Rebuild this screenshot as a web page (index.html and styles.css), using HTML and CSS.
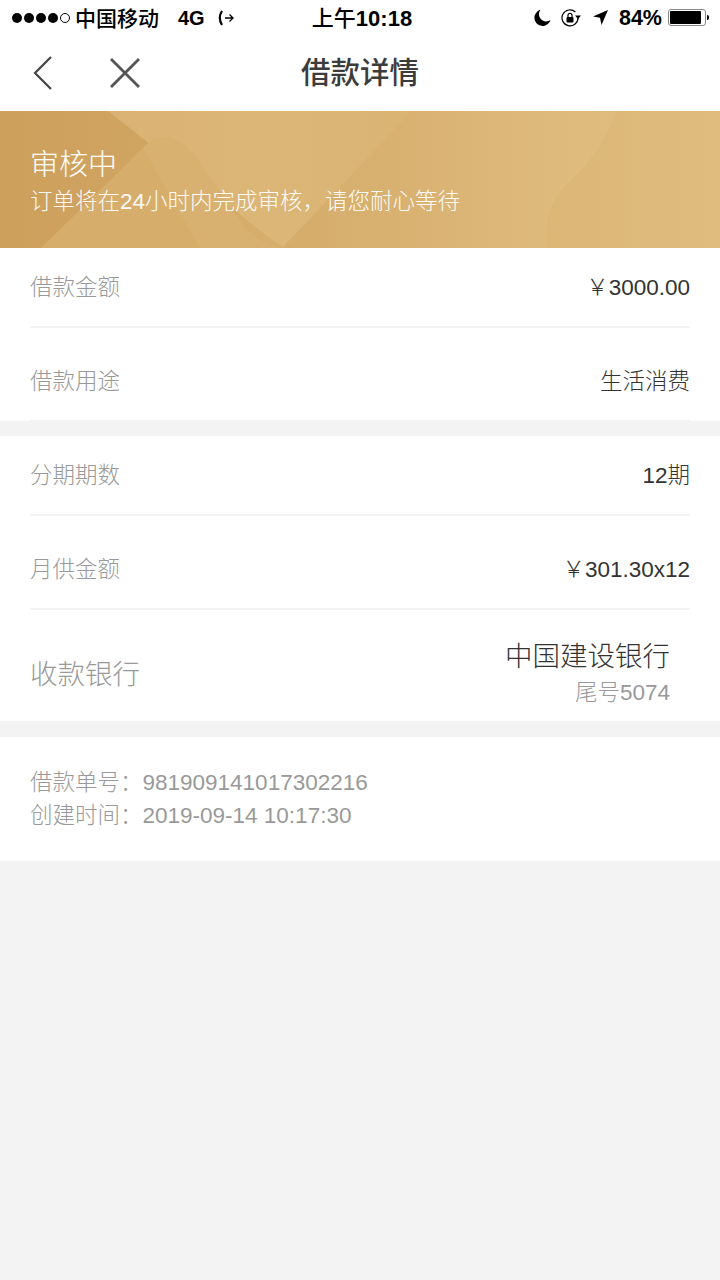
FILE: index.html
```html
<!DOCTYPE html>
<html lang="zh-CN">
<head>
<meta charset="utf-8">
<title>借款详情</title>
<link rel="stylesheet" href="styles.css">
</head>
<body>
<div class="page">
  <header class="top">
    <div class="status">
      <div class="status-left">
        <span class="dots"><i></i><i></i><i></i><i></i><i class="off"></i></span>
        <span class="carrier">中国移动</span>
        <span class="net">4G</span>
        <svg class="call" width="16" height="16" viewBox="0 0 16 16"><path d="M4 1C1.300 5 1.300 10.500 4 15" fill="none" stroke="#000" stroke-width="2.200"/><path d="M7 8h8M11.500 4.500 15 8l-3.500 3.500" fill="none" stroke="#000" stroke-width="1.300"/></svg>
      </div>
      <div class="clock"><span class="ampm">上午</span>10:18</div>
      <div class="status-right">
        <svg class="i-moon" width="17" height="17" viewBox="0 0 17 17"><path d="M6.500.8A8.200 8.200 0 1 0 16.500 11 7.200 7.200 0 0 1 6.500.8Z" fill="#000"/></svg>
        <svg class="i-lock" width="20" height="18" viewBox="0 0 20 18"><path d="M17 9a8 8 0 1 1-2.600-6" fill="none" stroke="#000" stroke-width="1.200"/><path d="M14 6.500h6l-3 3.500Z" fill="#000"/><rect x="5.500" y="8" width="7" height="5.500" rx="1" fill="#000"/><path d="M7 8V6.300a2 2 0 0 1 4 0V8" fill="none" stroke="#000" stroke-width="1.200"/></svg>
        <svg class="i-loc" width="15" height="15" viewBox="0 0 15 15"><path d="M15 0 0 6.500l7 1.200L8.500 15Z" fill="#000"/></svg>
        <span class="pct">84%</span>
        <span class="battery"><span class="level"></span></span>
      </div>
    </div>
    <nav class="nav">
      <div class="nav-icons">
        <svg class="back" width="19" height="34" viewBox="0 0 19 34"><path d="M18 1 2 17l16 16" fill="none" stroke="#444" stroke-width="2.200"/></svg>
        <svg class="close" width="32" height="32" viewBox="0 0 32 32"><path d="M2 2l28 28M30 2 2 30" fill="none" stroke="#555" stroke-width="2.800"/></svg>
      </div>
      <h1 class="nav-title">借款详情</h1>
    </nav>
  </header>

  <section class="banner">
    <svg class="banner-art" viewBox="0 0 720 137" preserveAspectRatio="none" aria-hidden="true">
      <defs>
        <linearGradient id="bg" x1="0" x2="1" y1="0" y2="0">
          <stop offset="0" stop-color="#cda05c"/>
          <stop offset="0.2" stop-color="#d0a561"/>
          <stop offset="0.57" stop-color="#d9b272"/>
          <stop offset="0.8" stop-color="#dfbb7e"/>
          <stop offset="1" stop-color="#e0bd80"/>
        </linearGradient>
        <linearGradient id="band" x1="0" x2="1" y1="0" y2="0">
          <stop offset="0" stop-color="#dab374"/>
          <stop offset="0.5" stop-color="#dcb677"/>
          <stop offset="1" stop-color="#dab473"/>
        </linearGradient>
        <linearGradient id="right" x1="0" x2="1" y1="0" y2="0">
          <stop offset="0" stop-color="#dbb675"/>
          <stop offset="1" stop-color="#e0bc7f"/>
        </linearGradient>
      </defs>
      <rect width="720" height="137" fill="url(#bg)"/>
      <path d="M108 0H412L282 137Z" fill="url(#band)"/>
      <path d="M41 137 143 37 284 137Z" fill="#d6ad6a"/>
      <path d="M143 37C158 20 180 24 196 45L240 110C250 125 262 132 284 137L200 137Z" fill="#d8b170"/>
      <path d="M547 137C543 105 552 85 575 65 590 50 605 30 617 0H720V137Z" fill="url(#right)"/>
    </svg>
    <div class="banner-text">
      <h2>审核中</h2>
      <p>订单将在24小时内完成审核，请您耐心等待</p>
    </div>
  </section>

  <section class="group first">
    <div class="row r1"><span class="label">借款金额</span><span class="val">￥3000.00</span></div>
    <div class="row r2"><span class="label">借款用途</span><span class="val">生活消费</span></div>
  </section>

  <section class="group second">
    <div class="row r1"><span class="label">分期期数</span><span class="val">12期</span></div>
    <div class="row r2"><span class="label">月供金额</span><span class="val">￥301.30x12</span></div>
    <div class="row bank">
      <span class="bank-label">收款银行</span>
      <div class="bank-info">
        <div class="bank-name">中国建设银行</div>
        <div class="bank-tail">尾号5074</div>
      </div>
    </div>
  </section>

  <section class="info">
    <div>借款单号：981909141017302216</div>
    <div>创建时间：2019-09-14 10:17:30</div>
  </section>
</div>
</body>
</html>
```
FILE: styles.css
```css
* { box-sizing: border-box; margin: 0; padding: 0; }
html, body { width: 720px; height: 1280px; overflow: hidden; }
body { background: #f3f3f3; font-family: "Liberation Sans", "Noto Sans CJK SC", sans-serif; }
.page { display: flex; flex-direction: column; }
.top { height: 111px; background: #fff; }
.status { height: 35px; display: flex; align-items: center; justify-content: space-between; position: relative; padding: 0 14px 0 12px; color: #000; }
.status-left, .status-right { display: flex; align-items: center; }
.dots { display: flex; gap: 2px; }
.dots i { width: 10px; height: 10px; border-radius: 50%; background: #000; }
.dots i.off { background: #fff; border: 1px solid #000; }
.carrier { font-size: 21px; font-weight: 500; margin-left: 5px; padding-bottom: 2px; }
.net { font-size: 20px; font-weight: 700; margin-left: 19px; padding-top: 2px; }
.call { margin-left: 13px; }
.clock { position: absolute; left: 4px; right: 0; text-align: center; font-size: 22px; font-weight: 700; padding-bottom: 3px; pointer-events: none; }
.ampm { font-weight: 500; }
.i-moon { margin-right: 10px; }
.i-lock { margin-right: 12px; }
.i-loc { margin-right: 11px; }
.pct { font-size: 21.5px; font-weight: 700; margin-right: 6px; padding-top: 2px; }
.battery { width: 38px; height: 17px; border: 1px solid #888; border-radius: 3px; padding: 1px; position: relative; display: block; }
.battery::after { content: ""; position: absolute; right: -4px; top: 5px; width: 2px; height: 5px; background: #000; border-radius: 0 2px 2px 0; }
.level { display: block; width: 90%; height: 100%; background: #000; border-radius: 1px; }
.nav { height: 76px; position: relative; display: flex; align-items: center; justify-content: center; padding-bottom: 6px; }
.nav-icons { position: absolute; left: 33px; top: 21px; display: flex; align-items: center; gap: 57px; }
.nav-title { font-size: 29.5px; font-weight: 500; color: #3c3c3c; }
.banner { height: 137px; position: relative; color: #fff; overflow: hidden; }
.banner-art { position: absolute; inset: 0; width: 100%; height: 100%; display: block; }
.banner-text { position: relative; padding: 36px 30px 0; font-weight: 300; }
.banner-text h2 { font-size: 29px; font-weight: 300; line-height: 36px; }
.banner-text p { font-size: 22.5px; line-height: 32px; margin-top: 3px; opacity: .95; }
.group { background: #fff; }
.second { margin-top: 15px; }
.row { margin: 0 30px; display: flex; align-items: center; justify-content: space-between; }
.r1 { height: 80px; padding-bottom: 5px; border-bottom: 2px solid #f3f3f3; }
.r2 { height: 93px; padding-top: 10px; border-bottom: 2px solid #f3f3f3; }
.first .r2 { border-bottom-width: 1px; }
.second .r2 { height: 94px; padding-top: 9px; }
.label { font-size: 22.5px; color: #999; font-weight: 300; }
.val { font-size: 22.5px; color: #333; font-weight: 300; }
.bank { height: 111px; align-items: flex-start; padding: 28px 20px 0 0; }
.bank-label { font-size: 27.5px; color: #999; font-weight: 300; padding-top: 14px; }
.bank-info { text-align: right; }
.bank-name { font-size: 27.5px; color: #333; font-weight: 300; line-height: 38px; }
.bank-tail { font-size: 22.5px; color: #999; font-weight: 300; line-height: 34px; }
.info { background: #fff; height: 124px; margin-top: 16px; padding: 29px 30px 0; font-size: 22.5px; line-height: 33px; color: #999; font-weight: 300; }
```
